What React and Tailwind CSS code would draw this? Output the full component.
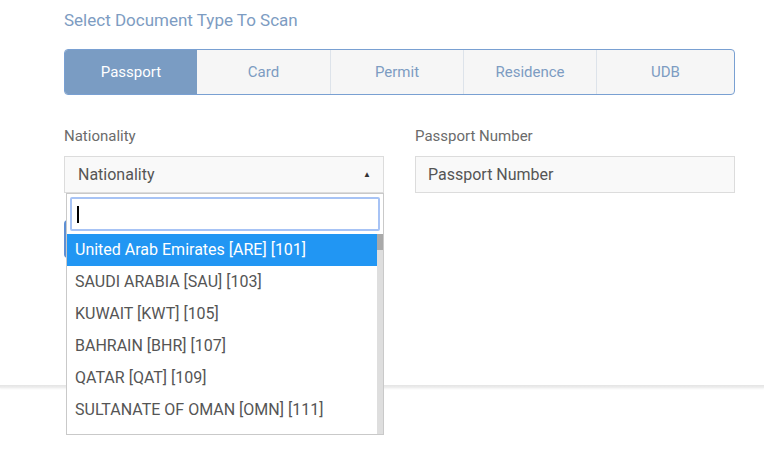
import React from "react";

const tabs = ["Passport", "Card", "Permit", "Residence", "UDB"];
const options = [
  "United Arab Emirates [ARE] [101]",
  "SAUDI ARABIA [SAU] [103]",
  "KUWAIT [KWT] [105]",
  "BAHRAIN [BHR] [107]",
  "QATAR [QAT] [109]",
  "SULTANATE OF OMAN [OMN] [111]",
];

export default function App() {
  return (
    <div
      className="relative w-[764px] h-[467px] overflow-hidden bg-white"
      style={{ fontFamily: "Roboto, 'Liberation Sans', sans-serif" }}
    >
      <div className="pl-[64px] pr-[29px] pt-[9px]">
        <div className="text-[17px] leading-[22px] text-[#7d9cc2]">
          Select Document Type To Scan
        </div>

        <div className="mt-[18px] grid h-[46px] grid-cols-[132px_133px_133px_133px_1fr] overflow-hidden rounded-[4px] border border-[#79a0d2] bg-[#f6f6f6]">
          {tabs.map((t, i) => (
            <div
              key={t}
              className={
                i === 0
                  ? "flex items-center justify-center bg-[#7a9cc3] text-[15px] text-white"
                  : i === 1
                  ? "flex items-center justify-center text-[15px] text-[#7d9cc2]"
                  : "flex items-center justify-center border-l border-[#dde3ea] text-[15px] text-[#7d9cc2]"
              }
            >
              {t}
            </div>
          ))}
        </div>

        <div className="mt-[31px] flex gap-[31px]">
          <div className="relative w-[320px]">
            <div className="text-[15px] leading-[20px] text-[#6b6b6b]">Nationality</div>
            <div className="mt-[10px] flex h-[37px] items-center justify-between border border-[#dcdcdc] bg-[#f9f9f9] pl-[13px] pr-[12px]">
              <span className="text-[16px] text-[#555]">Nationality</span>
              <span className="text-[8px] leading-none text-[#333]">▲</span>
            </div>
            <div className="mt-[27px] h-[38px] w-[130px] rounded-[4px] bg-[#5d8fd4]" />

            <div className="absolute left-[2px] top-[67px] z-10 h-[242px] w-[318px] border border-[#c9c9c9] bg-white">
              <div className="px-[3px] pt-[3px]">
                <div className="flex h-[34px] items-center rounded-[2px] border-2 border-[#a7c3f5] bg-white pl-[5px]">
                  <div className="h-[17px] w-[2px] bg-black" />
                </div>
              </div>
              <div className="mt-[3px] flex h-[200px]">
                <div className="flex-1 overflow-hidden">
                  {options.map((o, i) => (
                    <div
                      key={o}
                      className={
                        i === 0
                          ? "flex h-[32px] items-center bg-[#2196f3] pl-[8px] text-[16px] text-white"
                          : "flex h-[32px] items-center pl-[8px] text-[16px] text-[#555]"
                      }
                    >
                      {o}
                    </div>
                  ))}
                </div>
                <div className="w-[6px] bg-[#dedede]">
                  <div className="h-[16px] bg-[#a9a9a9]" />
                </div>
              </div>
            </div>
          </div>

          <div className="w-[320px]">
            <div className="text-[15px] leading-[20px] text-[#6b6b6b]">Passport Number</div>
            <div className="mt-[10px] flex h-[37px] items-center border border-[#dcdcdc] bg-[#f9f9f9] pl-[12px]">
              <span className="text-[16px] text-[#555]">Passport Number</span>
            </div>
          </div>
        </div>
      </div>

      <div className="mt-[127px] h-[3px] w-full bg-gradient-to-b from-[#e4e4e4] to-[#f0f0f0] shadow-[0_1px_2px_rgba(0,0,0,0.05)]" />
    </div>
  );
}
